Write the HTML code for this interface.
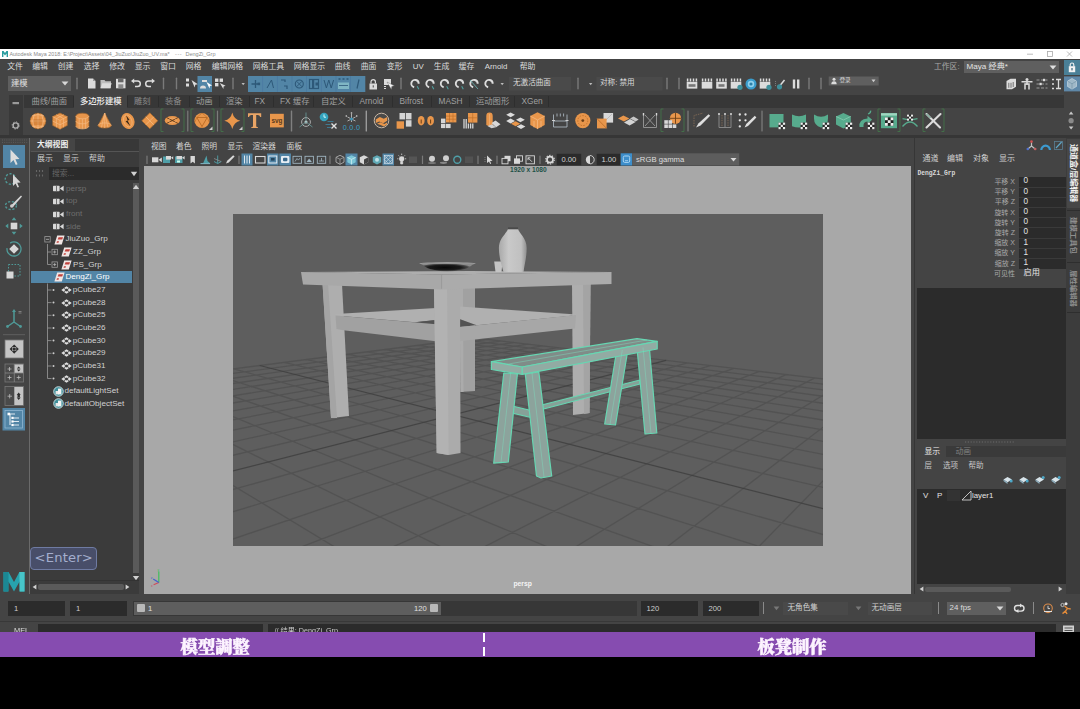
<!DOCTYPE html><html><head><meta charset="utf-8"><title>Maya</title><style>
html,body{margin:0;padding:0;background:#000;}
body{width:1080px;height:709px;position:relative;overflow:hidden;font-family:"Liberation Sans","Noto Sans CJK SC",sans-serif;}
#r div,#r span,#r svg{position:absolute;}
#r span{white-space:nowrap;line-height:1;}
#r{position:absolute;left:-4px;top:0;width:1088px;height:709px;filter:blur(0.5px);}
#q{position:absolute;left:4px;top:0;width:1080px;height:709px;}
</style></head><body><div id="r"><div style="left:0;top:59px;width:1088px;height:573.4px;background:#444"></div><div id="q"><div style="left:0px;top:49px;width:1080px;height:10px;background:#fff;"></div>
<span style="left:9.5px;top:51.8px;font-size:5.4px;color:#8a8a8a;">Autodesk Maya 2018: E:\Project\Assets\04_JiuZuo\JiuZuo_UV.ma*</span>
<span style="left:175px;top:51.8px;font-size:5.5px;color:#9a9a9a;letter-spacing:.6px;">---</span>
<span style="left:185.5px;top:51.8px;font-size:5.5px;color:#8a8a8a;">DengZi_Grp</span>
<svg style="left:1px;top:50px;width:8px;height:8px" viewBox="0 0 8 8"><path d="M1 7 V1 H2.6 L4 3 L5.4 1 H7 V7 H5.6 V3.6 L4 5.6 L2.4 3.6 V7Z" fill="#2a9d9f"/></svg>
<svg style="left:1020px;top:49px;width:60px;height:10px" viewBox="1020 49 60 10"><path d="M1027 54.2 h6" stroke="#aaa" stroke-width=".8"/><rect x="1047.5" y="51.5" width="5" height="5" fill="none" stroke="#aaa" stroke-width=".8"/><path d="M1067 51.5 l5 5 M1072 51.5 l-5 5" stroke="#aaa" stroke-width=".8"/></svg>
<div style="left:0px;top:59px;width:1080px;height:573px;background:#444444;"></div>
<span style="left:7.2px;top:63px;font-size:7.9px;color:#dcdcdc;">文件</span>
<span style="left:32.2px;top:63px;font-size:7.9px;color:#dcdcdc;">编辑</span>
<span style="left:57.7px;top:63px;font-size:7.9px;color:#dcdcdc;">创建</span>
<span style="left:83.7px;top:63px;font-size:7.9px;color:#dcdcdc;">选择</span>
<span style="left:109.2px;top:63px;font-size:7.9px;color:#dcdcdc;">修改</span>
<span style="left:134.7px;top:63px;font-size:7.9px;color:#dcdcdc;">显示</span>
<span style="left:160.2px;top:63px;font-size:7.9px;color:#dcdcdc;">窗口</span>
<span style="left:185.7px;top:63px;font-size:7.9px;color:#dcdcdc;">网格</span>
<span style="left:211.7px;top:63px;font-size:7.9px;color:#dcdcdc;">编辑网格</span>
<span style="left:252.7px;top:63px;font-size:7.9px;color:#dcdcdc;">网格工具</span>
<span style="left:293.7px;top:63px;font-size:7.9px;color:#dcdcdc;">网格显示</span>
<span style="left:334.7px;top:63px;font-size:7.9px;color:#dcdcdc;">曲线</span>
<span style="left:360.7px;top:63px;font-size:7.9px;color:#dcdcdc;">曲面</span>
<span style="left:386.7px;top:63px;font-size:7.9px;color:#dcdcdc;">变形</span>
<span style="left:412.7px;top:63px;font-size:7.9px;color:#dcdcdc;">UV</span>
<span style="left:433.7px;top:63px;font-size:7.9px;color:#dcdcdc;">生成</span>
<span style="left:458.7px;top:63px;font-size:7.9px;color:#dcdcdc;">缓存</span>
<span style="left:484.7px;top:63px;font-size:7.9px;color:#dcdcdc;">Arnold</span>
<span style="left:519.7px;top:63px;font-size:7.9px;color:#dcdcdc;">帮助</span>
<span style="left:934px;top:62.8px;font-size:7.8px;color:#a8a8a8;">工作区:</span>
<div style="left:963.5px;top:61px;width:95.5px;height:12px;background:#5f5f5f;"></div>
<span style="left:966.5px;top:62.8px;font-size:8.1px;color:#e4e4e4;">Maya 经典*</span>
<svg style="left:1049px;top:65px;width:8px;height:5px" viewBox="0 0 8 5"><path d="M.6 .6 H7.4 L4 4.6Z" fill="#e0e0e0"/></svg>
<div style="left:1064px;top:59.5px;width:16px;height:15.5px;background:#4a8097;"></div>
<svg style="left:1068px;top:62px;width:8px;height:11px" viewBox="0 0 8 11"><rect x=".8" y="4.2" width="6.4" height="6" fill="#f2f2f2"/><path d="M2.2 4.4 V2.8 a1.8 1.8 0 0 1 3.6 0 V4.4" fill="none" stroke="#f2f2f2" stroke-width="1.1"/><rect x="3.4" y="6" width="1.2" height="2.4" fill="#3a6a80"/></svg>
<div style="left:8px;top:76px;width:63px;height:14.5px;background:#5f5f5f;"></div>
<span style="left:11px;top:78.8px;font-size:8.3px;color:#e0e0e0;">建模</span>
<svg style="left:61px;top:81px;width:8px;height:5px" viewBox="0 0 8 5"><path d="M.6 .6 H7.4 L4 4.6Z" fill="#d8d8d8"/></svg>
<svg style="left:0;top:74px;width:1080px;height:20px" viewBox="0 74 1080 20"><rect x="76.3" y="77.5" width="1.4" height="12" rx=".7" fill="#7a7a7a"/><rect x="162.8" y="77.5" width="1.4" height="12" rx=".7" fill="#7a7a7a"/><rect x="175.8" y="77.5" width="1.4" height="12" rx=".7" fill="#7a7a7a"/><rect x="232.3" y="77.5" width="1.4" height="12" rx=".7" fill="#7a7a7a"/><rect x="400.3" y="77.5" width="1.4" height="12" rx=".7" fill="#7a7a7a"/><rect x="577.3" y="77.5" width="1.4" height="12" rx=".7" fill="#7a7a7a"/><rect x="666.3" y="77.5" width="1.4" height="12" rx=".7" fill="#7a7a7a"/><rect x="678.3" y="77.5" width="1.4" height="12" rx=".7" fill="#7a7a7a"/><rect x="808.3" y="77.5" width="1.4" height="12" rx=".7" fill="#7a7a7a"/><rect x="820.3" y="77.5" width="1.4" height="12" rx=".7" fill="#7a7a7a"/><path d="M88 78.5 h5 l2.5 2.5 v7.5 h-7.5z" fill="#dcdcdc"/><path d="M93 78.5 v2.5 h2.5" fill="#9a9a9a"/><path d="M100.5 80 h4 l1 1.2 h5.5 v7 h-10.5z" fill="#bdbdbd"/><path d="M100.5 88.2 l1.8-5 h9.4 l-1.8 5z" fill="#dcdcdc"/><rect x="116" y="78.8" width="9.5" height="9.5" fill="#dcdcdc"/><rect x="118" y="78.8" width="5.5" height="3.5" fill="#666"/><rect x="118.3" y="84.3" width="5" height="4" fill="#888"/><path d="M133.5 81 H137.5 a2.8 2.8 0 0 1 0 5.6 H135" fill="none" stroke="#dcdcdc" stroke-width="1.5"/><path d="M131 81 l3.2-2.4 v4.8z" fill="#dcdcdc"/><path d="M152.5 81 H148.5 a2.8 2.8 0 0 0 0 5.6 H151" fill="none" stroke="#dcdcdc" stroke-width="1.5"/><path d="M155 81 l-3.2-2.4 v4.8z" fill="#dcdcdc"/><rect x="186" y="78.5" width="3" height="3" fill="#dcdcdc"/><rect x="186" y="83.5" width="3" height="3" fill="#dcdcdc"/><path d="M191.5 80 l3.2 7.5 l.6-2.8 l2.6-.4z" fill="#dcdcdc"/><rect x="197.5" y="76" width="14.5" height="16" fill="#5285a6"/><path d="M200 88.5 a3 3 0 0 1 6 0z" fill="#dcdcdc"/><path d="M202 80 h5 v2 h-5z" fill="#dcdcdc"/><path d="M206.5 82 l3 6.5 l.4-2.6 l2.2-.4z" fill="#fff"/><rect x="215" y="78.5" width="3.4" height="3.4" fill="#dcdcdc"/><rect x="219.6" y="78.5" width="3.4" height="3.4" fill="#dcdcdc"/><rect x="215" y="83" width="3.4" height="3.4" fill="#dcdcdc"/><path d="M219.8 83 l3.6 6 l.2-2.6 l2-.6z" fill="#dcdcdc"/><path d="M241.5 83 h3.4 l-1.7 2.2z" fill="#bbb"/><rect x="248" y="76" width="117.3" height="16" fill="#5285a6"/><rect x="262.3" y="76" width=".8" height="16" fill="#4877a0" opacity=".8"/><rect x="276.9" y="76" width=".8" height="16" fill="#4877a0" opacity=".8"/><rect x="291.6" y="76" width=".8" height="16" fill="#4877a0" opacity=".8"/><rect x="306.2" y="76" width=".8" height="16" fill="#4877a0" opacity=".8"/><rect x="320.9" y="76" width=".8" height="16" fill="#4877a0" opacity=".8"/><rect x="335.6" y="76" width=".8" height="16" fill="#4877a0" opacity=".8"/><rect x="350.2" y="76" width=".8" height="16" fill="#4877a0" opacity=".8"/><path d="M251.5 84 h8 M255.5 80 v8" stroke="#2d5878" stroke-width="1.3"/><rect x="257.5" y="82.6" width="2.6" height="2.6" fill="#2d5878"/><path d="M267 88 l4.5-8 l2 8" fill="none" stroke="#2d5878" stroke-width="1"/><path d="M281 80 h4 v2 M284 86 h3 v3" fill="none" stroke="#2d5878" stroke-width="1.2"/><circle cx="299.3" cy="84" r="4" fill="none" stroke="#2d5878" stroke-width="1.1"/><path d="M296.5 81.2 l5.6 5.6 M302.1 81.2 l-5.6 5.6" stroke="#2d5878" stroke-width=".9"/><rect x="309.5" y="79.5" width="9" height="9" fill="none" stroke="#2d5878" stroke-width="1.2"/><rect x="312" y="80" width="2.2" height="8" fill="#2d5878"/><rect x="315.5" y="82.5" width="2.5" height="3" fill="#2d5878"/><path d="M324 80 l2.4 8 l2.4-8 l2.4 8 l2.4-8" fill="none" stroke="#2d5878" stroke-width="1"/><path d="M338.5 79 h2 M342.5 79 h2 M346.5 79 h2" stroke="#2d5878" stroke-width="1.6"/><rect x="338" y="82.5" width="11" height="6.5" fill="#7fb6c4"/><path d="M339 85.5 h9" stroke="#2d5878" stroke-width=".8"/><path d="M359 79.5 l-2 9" stroke="#2d5878" stroke-width="1.2"/><rect x="369.5" y="83.5" width="7.5" height="6" fill="#dcdcdc"/><path d="M371 83.6 v-1.8 a2.2 2.2 0 0 1 4.4 0 v1.8" fill="none" stroke="#dcdcdc" stroke-width="1.2"/><rect x="372.7" y="85.3" width="1.1" height="2.2" fill="#555"/><rect x="384" y="79" width="7" height="6" fill="#dcdcdc"/><path d="M387 82 l4.4 7.4 l.4-3 l2.6-.6z" fill="#f4f4f4" stroke="#555" stroke-width=".4"/><path d="M384 86.5 h2 M384 88.5 h2" stroke="#dcdcdc" stroke-width="1"/><circle cx="415" cy="83.6" r="3.7" fill="none" stroke="#dcdcdc" stroke-width="1.9" stroke-dasharray="16.2 7.05" transform="rotate(103 415 83.6)"/><path d="M417.2 86.2 l1.6 3" stroke="#4fa0a0" stroke-width="1.1"/><circle cx="430" cy="83.6" r="3.7" fill="none" stroke="#dcdcdc" stroke-width="1.9" stroke-dasharray="16.2 7.05" transform="rotate(103 430 83.6)"/><path d="M432.2 86.2 l1.6 3" stroke="#4fa0a0" stroke-width="1.1"/><circle cx="444.5" cy="83.6" r="3.7" fill="none" stroke="#dcdcdc" stroke-width="1.9" stroke-dasharray="16.2 7.05" transform="rotate(103 444.5 83.6)"/><path d="M446.7 86.2 l1.6 3" stroke="#4fa0a0" stroke-width="1.1"/><circle cx="459.5" cy="83.6" r="3.7" fill="none" stroke="#dcdcdc" stroke-width="1.9" stroke-dasharray="16.2 7.05" transform="rotate(103 459.5 83.6)"/><path d="M461.7 86.2 l1.6 3" stroke="#4fa0a0" stroke-width="1.1"/><circle cx="474" cy="83.6" r="3.7" fill="none" stroke="#dcdcdc" stroke-width="1.9" stroke-dasharray="16.2 7.05" transform="rotate(103 474 83.6)"/><path d="M470 80 l8 9" stroke="#6aa" stroke-width=".9"/><circle cx="489" cy="83.6" r="3.7" fill="none" stroke="#dcdcdc" stroke-width="1.9" stroke-dasharray="16.2 7.05" transform="rotate(103 489 83.6)"/><path d="M500.5 83 h3.4 l-1.7 2.2z" fill="#bbb"/><rect x="509" y="77" width="62" height="13.5" fill="#4a4a4a"/><path d="M589 83 h3.4 l-1.7 2.2z" fill="#bbb"/><rect x="596.5" y="77" width="66" height="13.5" fill="#4a4a4a"/><rect x="686.7" y="81.8" width="10.6" height="6.8" fill="#dcdcdc"/><path d="M687.6 78.6 v3 M690.5 78.6 v3 M693.5 78.6 v3 M696.4 78.6 v3" stroke="#dcdcdc" stroke-width="1.5"/><rect x="688.5" y="84.2" width="7" height="2.6" fill="#777"/><rect x="701.7" y="81.8" width="10.6" height="6.8" fill="#dcdcdc"/><path d="M702.6 78.6 v3 M705.5 78.6 v3 M708.5 78.6 v3 M711.4 78.6 v3" stroke="#dcdcdc" stroke-width="1.5"/><rect x="716.2" y="81.8" width="10.6" height="6.8" fill="#dcdcdc"/><path d="M717.1 78.6 v3 M720.0 78.6 v3 M723.0 78.6 v3 M725.9 78.6 v3" stroke="#dcdcdc" stroke-width="1.5"/><rect x="718.5" y="84.2" width="6" height="2.6" fill="#777"/><rect x="730.7" y="81.8" width="10.6" height="6.8" fill="#dcdcdc"/><path d="M731.6 78.6 v3 M734.5 78.6 v3 M737.5 78.6 v3 M740.4 78.6 v3" stroke="#dcdcdc" stroke-width="1.5"/><circle cx="740" cy="87.3" r="2.6" fill="#3f8f9a"/><circle cx="751" cy="84" r="5.5" fill="#3a9ccc"/><circle cx="751" cy="84" r="3.2" fill="#8fd0ec"/><circle cx="751" cy="84" r="1.6" fill="#2b7fa8"/><rect x="759.7" y="81.8" width="10.6" height="6.8" fill="#dcdcdc"/><path d="M760.6 78.6 v3 M763.5 78.6 v3 M766.5 78.6 v3 M769.4 78.6 v3" stroke="#dcdcdc" stroke-width="1.5"/><circle cx="769" cy="87.3" r="2.6" fill="#3f8f9a"/><path d="M778 88 l6.5-8" stroke="#dcdcdc" stroke-width="1.5"/><circle cx="779.5" cy="86.8" r="2.6" fill="#3f8f9a"/><path d="M775.5 81 v5" stroke="#888" stroke-width=".8" stroke-dasharray="1 1"/><rect x="792.8" y="79.5" width="2.4" height="9" fill="#dcdcdc"/><rect x="797" y="79.5" width="2.4" height="9" fill="#dcdcdc"/><rect x="828.7" y="76.5" width="50" height="9" fill="#5f5f5f"/><circle cx="834" cy="79.3" r="1.5" fill="#dcdcdc"/><path d="M831.3 84.3 a2.7 3 0 0 1 5.4 0z" fill="#dcdcdc"/><path d="M871.5 79.6 h4 l-2 2.6z" fill="#ccc"/><path d="M1006.5 81 l4-2.2 h5.5 v8 l-4 2.4 h-5.5z" fill="#dcdcdc"/><path d="M1008.8 82.8 v5 M1011 82.8 v5 M1013.2 82 v5" stroke="#555" stroke-width=".8"/><circle cx="1027" cy="79.4" r="1.5" fill="#dcdcdc"/><path d="M1021.5 81.8 h11 M1027 81 v4 M1025 89.5 v-5.5 h4 v5.5" stroke="#dcdcdc" stroke-width="1.5" fill="none"/><path d="M1036.5 80 h11 M1036.5 84 h11 M1036.5 88 h11" stroke="#9a9a9a" stroke-width="1" stroke-dasharray="3 1.5"/><rect x="1043" y="78.8" width="2.2" height="2.4" fill="#dcdcdc"/><rect x="1039.5" y="82.8" width="2.2" height="2.4" fill="#dcdcdc"/><path d="M1052 79.5 h2 M1052 84 h2 M1052 88.5 h2" stroke="#dcdcdc" stroke-width="1.6"/><path d="M1056 79.5 h5 M1058.5 79.5 v9 M1056 88.5 h5" stroke="#dcdcdc" stroke-width="1.3" fill="none"/><rect x="1064" y="76.4" width="16" height="15" fill="#5f88a8"/><path d="M1072 78.5 l4.5 2.6 v5.4 l-4.5 2.6 l-4.5-2.6 v-5.4z" fill="#9fb8c8" stroke="#d0dde6" stroke-width=".6"/><path d="M1072 83.8 v5 M1067.5 81.1 l4.5 2.7 l4.5-2.7" stroke="#6f8ea3" stroke-width=".6" fill="none"/></svg>
<span style="left:513px;top:79.4px;font-size:7.6px;color:#dadada;">无激活曲面</span>
<span style="left:600px;top:79.4px;font-size:7.6px;color:#dadada;">对称: 禁用</span>
<span style="left:839.5px;top:77.6px;font-size:5.6px;color:#dadada;">登录</span>
<div style="left:23.5px;top:95.4px;width:1040px;height:12.3px;background:#373737;"></div>
<div style="left:9px;top:95px;width:13.5px;height:40px;background:#393939;"></div>
<div style="left:74px;top:95px;width:52.5px;height:13px;background:#444;"></div>
<span style="left:31.5px;top:97.3px;font-size:8.3px;color:#a0a0a0;">曲线/曲面</span>
<span style="left:80px;top:97.3px;font-size:8.3px;color:#f0f0f0;font-weight:500;">多边形建模</span>
<span style="left:134px;top:97.3px;font-size:8.3px;color:#8a8a8a;">雕刻</span>
<span style="left:165px;top:97.3px;font-size:8.3px;color:#8a8a8a;">装备</span>
<span style="left:196px;top:97.3px;font-size:8.3px;color:#a0a0a0;">动画</span>
<span style="left:226px;top:97.3px;font-size:8.3px;color:#a0a0a0;">渲染</span>
<span style="left:254.5px;top:97.3px;font-size:8.3px;color:#a0a0a0;">FX</span>
<span style="left:280px;top:97.3px;font-size:8.3px;color:#a0a0a0;">FX 缓存</span>
<span style="left:321px;top:97.3px;font-size:8.3px;color:#a0a0a0;">自定义</span>
<span style="left:359.5px;top:97.3px;font-size:8.3px;color:#a0a0a0;">Arnold</span>
<span style="left:399.5px;top:97.3px;font-size:8.3px;color:#a0a0a0;">Bifrost</span>
<span style="left:438.5px;top:97.3px;font-size:8.3px;color:#a0a0a0;">MASH</span>
<span style="left:476px;top:97.3px;font-size:8.3px;color:#a0a0a0;">运动图形</span>
<span style="left:521.5px;top:97.3px;font-size:8.3px;color:#a0a0a0;">XGen</span>
<div style="left:73px;top:96px;width:1px;height:11px;background:#2e2e2e;"></div>
<div style="left:127px;top:96px;width:1px;height:11px;background:#2e2e2e;"></div>
<div style="left:158px;top:96px;width:1px;height:11px;background:#2e2e2e;"></div>
<div style="left:189px;top:96px;width:1px;height:11px;background:#2e2e2e;"></div>
<div style="left:219px;top:96px;width:1px;height:11px;background:#2e2e2e;"></div>
<div style="left:249px;top:96px;width:1px;height:11px;background:#2e2e2e;"></div>
<div style="left:273px;top:96px;width:1px;height:11px;background:#2e2e2e;"></div>
<div style="left:313px;top:96px;width:1px;height:11px;background:#2e2e2e;"></div>
<div style="left:352px;top:96px;width:1px;height:11px;background:#2e2e2e;"></div>
<div style="left:392px;top:96px;width:1px;height:11px;background:#2e2e2e;"></div>
<div style="left:431px;top:96px;width:1px;height:11px;background:#2e2e2e;"></div>
<div style="left:469px;top:96px;width:1px;height:11px;background:#2e2e2e;"></div>
<div style="left:514px;top:96px;width:1px;height:11px;background:#2e2e2e;"></div>
<div style="left:548px;top:96px;width:1px;height:11px;background:#2e2e2e;"></div>
<svg style="left:9px;top:95px;width:14px;height:40px" viewBox="9 95 14 40"><rect x="12.5" y="102" width="6.5" height="2.2" fill="#9a9a9a"/><circle cx="15.7" cy="125.5" r="2.6" fill="none" stroke="#b0b0b0" stroke-width="1.4"/><circle cx="15.7" cy="125.5" r="3.6" fill="none" stroke="#b0b0b0" stroke-width="1" stroke-dasharray="1.2 1.6"/></svg>
<svg style="left:0;top:107px;width:1080px;height:29px" viewBox="0 107 1080 29"><circle cx="38" cy="121" r="7.8" fill="#e8964b" stroke="#a8682c" stroke-width=".7"/><path d="M30.3 121 h15.4 M38 113 v16 M32 116 q6 -3 12 0 M32 126 q6 3 12 0 M34.3 114 q-3 7 0 14 M41.7 114 q3 7 0 14" stroke="#f4b981" stroke-width=".8" fill="none"/><rect x="33.5" y="119" width="9" height="6" fill="#b96a24" opacity=".35"/><path d="M60 113 l7.3 3.6 v8.8 l-7.3 3.8 l-7.3-3.8 v-8.8z" fill="#e8964b" stroke="#a8682c" stroke-width=".7"/><path d="M52.7 116.6 l7.3 3.8 l7.3-3.8 M60 120.4 v8.8 M56.3 114.8 l7.3 3.8 v8.7 M63.7 114.8 l-7.3 3.8 v8.7 M52.7 121 l7.3 3.8 l7.3-3.8" stroke="#f4b981" stroke-width=".7" fill="none"/><path d="M75.9 116 a6.5 2.8 0 0 1 13 0 v10 a6.5 2.8 0 0 1 -13 0z" fill="#e8964b" stroke="#a8682c" stroke-width=".7"/><path d="M75.9 116 a6.5 2.8 0 0 0 13 0 M75.9 121 a6.5 2.8 0 0 0 13 0 M75.9 126 a6.5 2.8 0 0 0 13 0 M79.2 118.4 v10 M85.6 118.4 v10 M82.4 118.8 v10" stroke="#f4b981" stroke-width=".7" fill="none"/><path d="M104.7 113 l6.6 12.5 a6.6 2.6 0 0 1 -13.2 0z" fill="#e8964b" stroke="#a8682c" stroke-width=".7"/><path d="M104.7 113 v15 M98.1 125.5 a6.6 2.6 0 0 1 13.2 0 M104.7 113 l-3.3 14.6 M104.7 113 l3.3 14.6" stroke="#f4b981" stroke-width=".7" fill="none"/><ellipse cx="127.8" cy="121" rx="6.6" ry="8.2" fill="#e8964b" transform="rotate(-20 127.8 121)"/><path d="M126 115 l3.6 5 l-2 .6 l3 6 l-5-5.4 l2-.6z" fill="#3d2a18"/><ellipse cx="127.8" cy="121" rx="4" ry="6.2" fill="none" stroke="#f4b981" stroke-width=".6" transform="rotate(-20 127.8 121)"/><path d="M149.8 112.8 l8 8 l-8 8 l-8-8z" fill="#e8964b" stroke="#a8682c" stroke-width=".7"/><path d="M145.8 116.8 l8 8 M153.8 116.8 l-8 8" stroke="#f4b981" stroke-width=".8"/><path d="M163.5 109 h-2.5 v22.5 h2.5 M181.5 109 h2.5 v22.5 h-2.5" stroke="#42784a" stroke-width=".8" fill="none"/><ellipse cx="172.3" cy="120.5" rx="7.6" ry="4.6" fill="#e8964b"/><path d="M166.5 117.5 l11.6 6 M178.1 117.5 l-11.6 6" stroke="#5a3a1c" stroke-width=".9"/><ellipse cx="172.3" cy="120.5" rx="4" ry="2.3" fill="none" stroke="#f4b981" stroke-width=".5"/><rect x="187.20000000000002" y="110.5" width="1.2" height="21" rx=".6" fill="#7c7c7c"/><path d="M193.5 109 h-2.5 v22.5 h2.5 M211.5 109 h2.5 v22.5 h-2.5" stroke="#42784a" stroke-width=".8" fill="none"/><circle cx="202" cy="120.5" r="7.6" fill="#e8964b"/><path d="M196.8 117.5 h10.4 l-5.2 9z" fill="none" stroke="#b96a24" stroke-width=".9"/><path d="M202 113 l-5.2 4.5 M202 113 l5.2 4.5 M196.8 117.5 l-2.2 5 M207.2 117.5 l2.2 5 M202 126.5 v1.6" stroke="#b96a24" stroke-width=".6"/><path d="M212.5 126.5 v3.5 h-3.5z" fill="#cfcfcf"/><rect x="216.9" y="110.5" width="1.2" height="21" rx=".6" fill="#7c7c7c"/><path d="M223.5 109 h-2.5 v22.5 h2.5 M241.5 109 h2.5 v22.5 h-2.5" stroke="#42784a" stroke-width=".8" fill="none"/><path d="M232.3 112.5 q1.6 6.8 8 8.3 q-6.4 1.5 -8 8.3 q-1.6-6.8 -8-8.3 q6.4-1.5 8-8.3z" fill="#e8964b"/><path d="M242.5 126.5 v3.5 h-3.5z" fill="#cfcfcf"/><path d="M248 113.3 h13.2 v3.6 h-1 q-.4-2 -2.4-2 h-1.6 v11 q0 1.2 1.8 1.3 v.9 h-6.8 v-.9 q1.8-.1 1.8-1.3 v-11 h-1.6 q-2 0 -2.4 2 h-1z" fill="#e9a566"/><rect x="270" y="113.8" width="13.8" height="13.6" fill="#e8964b"/><text x="276.9" y="123" font-size="6.4" font-weight="700" fill="#5a3a1c" text-anchor="middle" font-family="Liberation Sans,sans-serif">svg</text><rect x="290.8" y="110.5" width="1.4" height="21" rx=".6" fill="#808080"/><circle cx="306" cy="122" r="4.4" fill="none" stroke="#b8b8b8" stroke-width=".9"/><circle cx="306" cy="122" r="1.5" fill="#e4e4e4"/><path d="M306 122 V112.5 M306 122 L299.5 127 M306 122 L312.5 127" stroke="#6a9c9c" stroke-width=".8"/><circle cx="324" cy="117" r="4.3" fill="#35a3bd"/><path d="M324 114.4 v2.8 h2" stroke="#dff" stroke-width=".9" fill="none"/><path d="M327.5 121.5 h6 M325.5 124.5 h5 M327 127.5 h4" stroke="#3f7f98" stroke-width=".9"/><path d="M331.5 123.5 l5 5 M336.5 123.5 l-5 5" stroke="#e2e2e2" stroke-width="1.4"/><path d="M351.5 114 v8 M347.5 117 l8 4 M355.5 117 l-8 4" stroke="#c8c8c8" stroke-width=".8"/><circle cx="351.5" cy="119" r="1.6" fill="#3f8fb0"/><circle cx="346.3" cy="116" r=".8" fill="#ddd"/><circle cx="356.7" cy="116" r=".8" fill="#ddd"/><circle cx="351.5" cy="113" r=".8" fill="#ddd"/><text x="351.5" y="129.5" font-size="7.2" fill="#3b9fc4" text-anchor="middle" font-family="Liberation Sans,sans-serif" letter-spacing=".3">0.0.0</text><rect x="365.6" y="110.5" width="1.4" height="21" rx=".6" fill="#9a9a9a"/><circle cx="381.5" cy="120.5" r="7.3" fill="#4a4a4a" stroke="#c9b7a5" stroke-width="1"/><path d="M375.8 119.5 l4-2.6 l4 1.8 l3.4-1.6 v3.6 l-4 2.6 l-4-1.8 l-3.4 1.6z" fill="#e8964b"/><path d="M377 123.8 l3.4-1.6 l4 1.8 l2.6-1.4 v1.8 l-3 2 l-4-1.6z" fill="#e8964b"/><rect x="399.5" y="113" width="5.6" height="6.4" fill="#d4d4d4"/><rect x="405.9" y="113" width="5.6" height="6.4" fill="#d4d4d4"/><rect x="405.9" y="120.2" width="5.6" height="6.4" fill="#d4d4d4"/><rect x="396.6" y="121.3" width="7.4" height="7.4" fill="#e8964b"/><ellipse cx="421.2" cy="120.7" rx="3.4" ry="4.8" fill="#e8964b"/><ellipse cx="430.6" cy="120.7" rx="3.4" ry="4.8" fill="#e8964b"/><path d="M421.2 119.5 v4 M430.6 119.5 v4" stroke="#6b3f17" stroke-width="1"/><rect x="446" y="113" width="10.4" height="9.4" fill="#e8964b"/><path d="M449.5 113 v9.4 M453 113 v9.4 M446 116.1 h10.4 M446 119.2 h10.4" stroke="#b96a24" stroke-width=".6"/><rect x="441" y="118.6" width="4.4" height="4.6" fill="#d6d6d6"/><rect x="441" y="123.9" width="4.4" height="4.2" fill="#d6d6d6"/><rect x="446" y="123.9" width="4.6" height="4.2" fill="#d6d6d6"/><rect x="468" y="113" width="9.4" height="9.6" fill="#e8964b"/><path d="M472.7 113 v9.6 M468 117.8 h9.4" stroke="#b96a24" stroke-width=".6"/><path d="M464 119 v9.4 M466.2 119 v9.4 M468.4 123.4 v5 M470.6 123.4 v5 M472.8 123.4 v5" stroke="#d6d6d6" stroke-width="1.3"/><path d="M486.3 116 a3.2 3.4 0 0 1 6.4 0 v9 l-3.2 1.6 l-3.2-1.6z" fill="#e8964b"/><path d="M489.5 114 v11" stroke="#f4b981" stroke-width=".6"/><path d="M491.5 123 l4-2.4 l5 3.6 l-4.4 3z" fill="#d8d8d8"/><path d="M487.5 126 l4 2.2 l4.6-1 l-4-3z" fill="#d0d0d0"/><path d="M510.6 112.4 l4.4 2.4 l-4.4 2.4 l-4.4-2.4z" fill="#dcdcdc"/><path d="M510.6 118.6 l4.4 2.4 l-4.4 2.4 l-4.4-2.4z" fill="#dcdcdc"/><path d="M520.4 117.4 l4.4 2.4 l-4.4 2.4 l-4.4-2.4z" fill="#dcdcdc"/><path d="M521 124.2 l4.4 2.4 l-4.4 2.4 l-4.4-2.4z" fill="#dcdcdc"/><path d="M515.6 121.2 l4.6 2.5 l-4.6 2.5 l-4.6-2.5z" fill="#e8964b"/><path d="M537.5 112.3 l7.2 3.8 v9 l-7.2 4 l-7.2-4 v-9z" fill="#e8964b"/><path d="M530.3 116.1 l7.2 3.8 l7.2-3.8 M537.5 119.9 v9.2 M534 121 v6.4 M541 121 v6.4" stroke="#f4b981" stroke-width=".8" fill="none"/><path d="M553.5 114.5 v12.5 h13.5 v-12.5 M553.5 121 h13.5 M557 113.5 v3 M560.3 113.5 v3 M563.6 113.5 v3" stroke="#a9b4bd" stroke-width=".9" fill="none"/><path d="M552 120.5 l3 0 M565.5 120.5 h3" stroke="#d0d0d0" stroke-width="1.2"/><circle cx="582.8" cy="120.6" r="7.6" fill="#e8964b"/><circle cx="582.8" cy="120.6" r="5" fill="none" stroke="#b96a24" stroke-width=".8" stroke-dasharray="1.6 1.2"/><circle cx="582.8" cy="120.6" r="1.4" fill="#6b3f17"/><rect x="603.5" y="113" width="9.6" height="9.6" fill="#d8d8d8"/><path d="M605 121 l7-7" stroke="#aaa" stroke-width=".6"/><rect x="597" y="118.6" width="9.6" height="9.8" fill="#e8964b"/><path d="M597 118.6 l9.6 9.8" stroke="#b96a24" stroke-width=".8"/><path d="M623.4 115.4 l6 3.2 l-5.4 3 l-6-3.2z" fill="#e8964b"/><path d="M624 122.4 l6-3.4 l5.6 3 l-6 3.6z" fill="#d4d4d4"/><path d="M630 118.6 l3.6-2 l5 2.8 l-3 2z" fill="#c6c6c6"/><path d="M643.5 114 v13.5 M656.5 114 v13.5 M643.5 127.5 h13 M645 115 l10 11 M655 115 l-10 11" stroke="#9a9a9a" stroke-width=".9" fill="none"/><path d="M643.5 113 v2.4 M656.5 113 v2.4" stroke="#d8d8d8" stroke-width="1.4"/><path d="M663.5 109 h-2.5 v22.5 h2.5 M681.5 109 h2.5 v22.5 h-2.5" stroke="#42784a" stroke-width=".8" fill="none"/><circle cx="675.5" cy="118.3" r="5.6" fill="#e8964b"/><path d="M675.5 112.7 v11.2 M669.9 118.3 h11.2" stroke="#6b3f17" stroke-width=".9"/><rect x="664.3" y="120.2" width="3.6" height="3.6" fill="#d8d8d8"/><rect x="668.5" y="120.2" width="3.6" height="3.6" fill="#d8d8d8"/><rect x="664.3" y="124.4" width="3.6" height="3.6" fill="#d8d8d8"/><rect x="668.5" y="124.4" width="3.6" height="3.6" fill="#d8d8d8"/><rect x="672.7" y="124.4" width="3.6" height="3.6" fill="#d8d8d8"/><rect x="687.35" y="110.5" width="1.3" height="21" rx=".6" fill="#7a7a7a"/><path d="M694 126.5 v-11 l9-2.4" stroke="#8a6e58" stroke-width=".8" fill="none" stroke-dasharray="1.5 1"/><path d="M696 127.6 l2.6-4.4 l10-9 l1.6 1.6 l-9.6 9.6z" fill="#dedede"/><path d="M719 113.5 v14 M725 113.5 v14 M731 113.5 v14 M719 127.5 h12" stroke="#8f8f8f" stroke-width=".9" fill="none"/><path d="M722 115 v11 M728 115 v11" stroke="#8a6e58" stroke-width=".8" stroke-dasharray="1.4 1"/><path d="M719 113 v2 M725 113 v2 M731 113 v2" stroke="#ddd" stroke-width="1.4"/><circle cx="739.8" cy="114.5" r="1.15" fill="#e6e6e6"/><circle cx="745.5" cy="114.5" r="1.15" fill="#e6e6e6"/><circle cx="739.8" cy="120.3" r="1.15" fill="#e6e6e6"/><circle cx="745.5" cy="120.3" r="1.15" fill="#e6e6e6"/><circle cx="739.8" cy="126.4" r="1.15" fill="#e6e6e6"/><path d="M744.6 127.6 l1.6-3.6 l8.6-8.2 l1.6 1.6 l-8.4 8.6z" fill="#dedede"/><rect x="761.35" y="110.5" width="1.3" height="21" rx=".6" fill="#7a7a7a"/><rect x="769.5" y="114" width="14" height="13.4" fill="#57ab8d"/><rect x="778.5" y="122.6" width="6.6" height="6.6" fill="#2a2a2a"/><rect x="778.5" y="122.6" width="2.2" height="2.2" fill="#eee"/><rect x="782.9" y="122.6" width="2.2" height="2.2" fill="#eee"/><rect x="780.7" y="124.8" width="2.2" height="2.2" fill="#eee"/><rect x="778.5" y="127.0" width="2.2" height="2.2" fill="#eee"/><rect x="782.9" y="127.0" width="2.2" height="2.2" fill="#eee"/><path d="M792 114.6 q7 3.4 14 0 v11.6 q-7 2.6 -14 0z" fill="#57ab8d"/><rect x="800.6" y="122.6" width="6.6" height="6.6" fill="#2a2a2a"/><rect x="800.6" y="122.6" width="2.2" height="2.2" fill="#eee"/><rect x="805.0" y="122.6" width="2.2" height="2.2" fill="#eee"/><rect x="802.8000000000001" y="124.8" width="2.2" height="2.2" fill="#eee"/><rect x="800.6" y="127.0" width="2.2" height="2.2" fill="#eee"/><rect x="805.0" y="127.0" width="2.2" height="2.2" fill="#eee"/><path d="M814 114.4 q7 4.6 14 0 v4 q0 7 -7 9 q-7-2 -7-9z" fill="#57ab8d"/><rect x="822.6" y="122.6" width="6.6" height="6.6" fill="#2a2a2a"/><rect x="822.6" y="122.6" width="2.2" height="2.2" fill="#eee"/><rect x="827.0" y="122.6" width="2.2" height="2.2" fill="#eee"/><rect x="824.8000000000001" y="124.8" width="2.2" height="2.2" fill="#eee"/><rect x="822.6" y="127.0" width="2.2" height="2.2" fill="#eee"/><rect x="827.0" y="127.0" width="2.2" height="2.2" fill="#eee"/><path d="M843.4 113 l7.4 3.4 v8.2 l-7.4 3.8 l-7.4-3.8 v-8.2z" fill="#57ab8d"/><path d="M836 116.4 l7.4 3.6 l7.4-3.6" stroke="#8fd0b6" stroke-width=".7" fill="none"/><rect x="845.6" y="122.6" width="6.6" height="6.6" fill="#2a2a2a"/><rect x="845.6" y="122.6" width="2.2" height="2.2" fill="#eee"/><rect x="850.0" y="122.6" width="2.2" height="2.2" fill="#eee"/><rect x="847.8000000000001" y="124.8" width="2.2" height="2.2" fill="#eee"/><rect x="845.6" y="127.0" width="2.2" height="2.2" fill="#eee"/><rect x="850.0" y="127.0" width="2.2" height="2.2" fill="#eee"/><path d="M859.5 127 q-1-8 8-8.6 v-2.6 l4.6 4 l-4.6 4 v-2.4 q-4.6.4 -4 5.6z" fill="#57ab8d"/><path d="M868 114 q3-1 2.6-3.4" stroke="#57ab8d" stroke-width="1.3" fill="none"/><rect x="867.8" y="122.6" width="6.6" height="6.6" fill="#2a2a2a"/><rect x="867.8" y="122.6" width="2.2" height="2.2" fill="#eee"/><rect x="872.1999999999999" y="122.6" width="2.2" height="2.2" fill="#eee"/><rect x="870.0" y="124.8" width="2.2" height="2.2" fill="#eee"/><rect x="867.8" y="127.0" width="2.2" height="2.2" fill="#eee"/><rect x="872.1999999999999" y="127.0" width="2.2" height="2.2" fill="#eee"/><path d="M880.5 109 h-2.5 v22.5 h2.5 M897.5 109 h2.5 v22.5 h-2.5" stroke="#42784a" stroke-width=".8" fill="none"/><rect x="881" y="113.2" width="16" height="15" fill="#57ab8d"/><rect x="881" y="113.2" width="16" height="2.4" fill="#9fd6c0"/><rect x="885" y="117.4" width="8.4" height="8.4" fill="#1e1e1e"/><rect x="885" y="117.4" width="2.8" height="2.8" fill="#eee"/><rect x="890.6" y="117.4" width="2.8" height="2.8" fill="#eee"/><rect x="887.8" y="120.2" width="2.8" height="2.8" fill="#eee"/><rect x="885" y="123" width="2.8" height="2.8" fill="#eee"/><rect x="890.6" y="123" width="2.8" height="2.8" fill="#eee"/><path d="M902.5 118.6 q7.5 2 15 0 M902.5 126.5 q7.5-9 15 0" stroke="#57ab8d" stroke-width="1.3" fill="none"/><rect x="907" y="114.6" width="6" height="6" fill="#2a2a2a"/><rect x="907" y="114.6" width="2" height="2" fill="#eee"/><rect x="911" y="114.6" width="2" height="2" fill="#eee"/><rect x="909" y="116.6" width="2" height="2" fill="#eee"/><rect x="907" y="118.6" width="2" height="2" fill="#eee"/><rect x="911" y="118.6" width="2" height="2" fill="#eee"/><path d="M925.5 109 h-2.5 v22.5 h2.5 M941.5 109 h2.5 v22.5 h-2.5" stroke="#42784a" stroke-width=".8" fill="none"/><path d="M926.5 114 l13.5 13.5 M940.5 114 l-14 13.5" stroke="#dcdcdc" stroke-width="2.1" stroke-linecap="round"/><path d="M926.5 114 l4 4" stroke="#3d8a70" stroke-width="1" /><path d="M1068.8 114.6 h4.6 l-2.3-3z M1068.8 126.6 h4.6 l-2.3 3z" fill="#c8c8c8"/><circle cx="1071.1" cy="120.7" r="2.6" fill="#8a8a8a"/></svg>
<div style="left:0px;top:135.2px;width:1080px;height:3px;background:#363636;"></div>
<div style="left:29.3px;top:138px;width:1px;height:457px;background:#6a6a6a;"></div>
<div style="left:3px;top:145px;width:22px;height:23px;background:#5285a6;"></div>
<svg style="left:0;top:138px;width:29px;height:460px" viewBox="0 138 29 460"><path d="M10.5 149.5 L10.5 163 L13.5 160 L15.8 165 L17.6 164.2 L15.4 159.3 L19.5 159 Z" fill="#ddd"/><circle cx="10.5" cy="179" r="5.2" fill="none" stroke="#4f9a98" stroke-width="1.4" stroke-dasharray="2.2 1.6"/><path d="M13 174.5 L13 186 L15.6 183.4 L17.5 187.6 L19 186.9 L17.2 182.8 L20.6 182.5 Z" fill="#d6d6d6"/><ellipse cx="11" cy="205.5" rx="5.5" ry="4" fill="none" stroke="#4f9a98" stroke-width="1.3" stroke-dasharray="2.2 1.6"/><path d="M11.5 205 L21 195.5 L22 196.6 L13.3 206.5 Z" fill="#d8d8d8"/><circle cx="11.8" cy="206" r="1.8" fill="#ccc"/><rect x="10.7" y="222.7" width="6.6" height="6.6" fill="#d6d6d6"/><path d="M14 217.3 l2.4 3 h-4.8z M14 234.7 l2.4-3 h-4.8z M5.3 226 l3-2.4 v4.8z M22.7 226 l-3-2.4 v4.8z" fill="#4f9a98"/><circle cx="14" cy="249" r="7" fill="none" stroke="#4f9a98" stroke-width="1.3" stroke-dasharray="30 6" transform="rotate(-60 14 249)"/><rect x="10.6" y="245.6" width="6.8" height="6.8" fill="#d8d8d8" transform="rotate(45 14 249)"/><rect x="8.5" y="264.5" width="11.5" height="11.5" fill="none" stroke="#4f9a98" stroke-width="1" stroke-dasharray="1.6 1.4"/><rect x="6.5" y="271.5" width="7" height="7" fill="#d8d8d8"/><path d="M14 322 V311 M14 322 L7.5 326.5 M14 322 L20.5 326.5" stroke="#4f9a98" stroke-width="1.5" fill="none"/><path d="M14 309 l2 3 h-4z" fill="#4f9a98"/><circle cx="7.5" cy="326.5" r="1.4" fill="#4f9a98"/><circle cx="20.5" cy="326.5" r="1.4" fill="#4f9a98"/><path d="M18.5 311.5 h3 M18.5 313 h3" stroke="#999" stroke-width=".7"/><rect x="3" y="334" width="22" height="1.2" fill="#5a5a5a"/><rect x="5" y="340" width="18.5" height="18" fill="#c4c4c4" stroke="#777" stroke-width=".8"/><path d="M14.2 344.5 l2.6 2.6 h-5.2z M14.2 353.7 l2.6-2.6 h-5.2z M9.6 349.1 l2.6-2.6 v5.2z M18.8 349.1 l-2.6-2.6 v5.2z" fill="#2e2e2e"/><rect x="12.7" y="347.6" width="3" height="3" fill="#2e2e2e"/><rect x="5" y="364" width="18.5" height="18" fill="#4a4a4a" stroke="#777" stroke-width=".8"/><rect x="14.3" y="364.4" width="8.8" height="8.6" fill="#c4c4c4"/><path d="M14.3 364 V382 M5 373 H23.5" stroke="#888" stroke-width=".8"/><path d="M18.7 366.5 l1.8 2 h-3.6z M18.7 371.5 l1.8-2 h-3.6z" fill="#2e2e2e"/><path d="M9.5 367 v4 M7.5 369 h4 M9.5 375.5 v4 M7.5 377.5 h4 M18.7 375.5 v4 M16.7 377.5 h4" stroke="#bbb" stroke-width=".8"/><rect x="5" y="386.5" width="18.5" height="19" fill="#4a4a4a" stroke="#777" stroke-width=".8"/><rect x="14.3" y="387" width="8.8" height="18" fill="#c4c4c4"/><path d="M18.7 392.5 l2 2.4 h-4z M18.7 400 l2-2.4 h-4z" fill="#2e2e2e"/><rect x="17.5" y="395" width="2.4" height="2.4" fill="#2e2e2e"/><path d="M7.5 396.2 h4.5 M9.7 394 v4.4" stroke="#bbb" stroke-width=".8"/><rect x="2.5" y="408" width="22.5" height="22.5" fill="#5285a6"/><rect x="5" y="410.5" width="17.5" height="17.5" fill="none" stroke="#8fb6d2" stroke-width=".8"/><path d="M8 414 h7 M12 418 h7 M12 421.5 h7 M12 425 h7 M10 414 V425" stroke="#dfe9f0" stroke-width="1.1"/><rect x="7.5" y="412.7" width="2.6" height="2.6" fill="#fff"/><rect x="11.4" y="416.8" width="2.2" height="2.2" fill="#fff"/><rect x="11.4" y="420.4" width="2.2" height="2.2" fill="#fff"/><rect x="11.4" y="423.9" width="2.2" height="2.2" fill="#fff"/><path d="M3.5 591.5 V572 L8.6 572 L14 582 L19.4 572 L24.5 572 V591.5 H19.6 V581.5 L14 591.5 L8.4 581.5 V591.5 Z" fill="#27a3ae"/><path d="M3.5 591.5 V572 L8.6 572 L8.4 591.5 Z" fill="#1b8894"/><path d="M24.5 591.5 V572 L19.4 572 L19.6 591.5 Z" fill="#47c4c8"/></svg>
<svg style="left:2px;top:139px;width:26px;height:5px" viewBox="0 0 26 5"><path d="M0 1 h26 M0 3.4 h26" stroke="#5c5c5c" stroke-width="1" stroke-dasharray="1 1.2"/></svg>
<div style="left:30px;top:150px;width:109px;height:444px;background:#3b3b3b;"></div>
<div style="left:30px;top:138.5px;width:44.5px;height:13px;background:#454545;"></div>
<div style="left:74.5px;top:139px;width:64.5px;height:12px;background:#383838;"></div>
<span style="left:37px;top:140.6px;font-size:7.8px;color:#f0f0f0;font-weight:700;">大纲视图</span>
<div style="left:31px;top:151px;width:108px;height:1px;background:#555;"></div>
<span style="left:37px;top:154.8px;font-size:7.9px;color:#ccc;">展示</span>
<span style="left:63px;top:154.8px;font-size:7.9px;color:#ccc;">显示</span>
<span style="left:89px;top:154.8px;font-size:7.9px;color:#ccc;">帮助</span>
<div style="left:49px;top:167px;width:90px;height:13px;background:#2b2b2b;"></div>
<span style="left:52px;top:170px;font-size:7.8px;color:#666;">搜索...</span>
<svg style="left:130px;top:171px;width:8px;height:6px" viewBox="0 0 8 6"><path d="M0.8 0.8 H7.2 L4 5.2Z" fill="#d0d0d0"/></svg>
<svg style="left:35px;top:168px;width:10px;height:12px" viewBox="0 0 10 12"><path d="M1.5 2v2 M4.5 2v2 M7.5 2v2 M1.5 6.5v2 M4.5 6.5v2 M7.5 6.5v2" stroke="#666" stroke-width="1.1"/></svg>
<div style="left:132.5px;top:183px;width:6.5px;height:390px;background:#5a5a5a;"></div>
<svg style="left:132px;top:184px;width:8px;height:6px" viewBox="0 0 8 6"><path d="M0.8 5 H7.2 L4 .8Z" fill="#d0d0d0"/></svg>
<svg style="left:132px;top:575px;width:8px;height:6px" viewBox="0 0 8 6"><path d="M0.8 1 H7.2 L4 5.2Z" fill="#d0d0d0"/></svg>
<div style="left:31px;top:271px;width:100.5px;height:12.4px;background:#5285a6;"></div>
<svg style="left:53px;top:185.4px;width:11px;height:7px" viewBox="0 0 11 7"><rect x="0" y="0.8" width="6.6" height="5.4" rx=".6" fill="#d8d8d8"/><path d="M6.8 3.5 L10.6 0.8 V6.2Z" fill="#d8d8d8"/><rect x="3.2" y=".8" width=".8" height="5.4" fill="#555"/></svg>
<span style="left:66px;top:184.8px;font-size:8.1px;color:#6e6e6e;">persp</span>
<svg style="left:53px;top:198.1px;width:11px;height:7px" viewBox="0 0 11 7"><rect x="0" y="0.8" width="6.6" height="5.4" rx=".6" fill="#d8d8d8"/><path d="M6.8 3.5 L10.6 0.8 V6.2Z" fill="#d8d8d8"/><rect x="3.2" y=".8" width=".8" height="5.4" fill="#555"/></svg>
<span style="left:66px;top:197.4px;font-size:8.1px;color:#6e6e6e;">top</span>
<svg style="left:53px;top:210.7px;width:11px;height:7px" viewBox="0 0 11 7"><rect x="0" y="0.8" width="6.6" height="5.4" rx=".6" fill="#d8d8d8"/><path d="M6.8 3.5 L10.6 0.8 V6.2Z" fill="#d8d8d8"/><rect x="3.2" y=".8" width=".8" height="5.4" fill="#555"/></svg>
<span style="left:66px;top:210.1px;font-size:8.1px;color:#6e6e6e;">front</span>
<svg style="left:53px;top:223.4px;width:11px;height:7px" viewBox="0 0 11 7"><rect x="0" y="0.8" width="6.6" height="5.4" rx=".6" fill="#d8d8d8"/><path d="M6.8 3.5 L10.6 0.8 V6.2Z" fill="#d8d8d8"/><rect x="3.2" y=".8" width=".8" height="5.4" fill="#555"/></svg>
<span style="left:66px;top:222.8px;font-size:8.1px;color:#6e6e6e;">side</span>
<svg style="left:53.5px;top:234.5px;width:11px;height:10px" viewBox="0 0 11 10"><path d="M3.2 0.6 H10.6 L7.8 9.4 H0.4 Z" fill="#f0e6e4"/><path d="M4.5 2.2 H9 L8.2 4.6 H3.7Z" fill="#c0403a"/><path d="M3 6.2 H5 L4.5 7.8 H2.5Z" fill="#c0403a"/></svg>
<span style="left:65.5px;top:235.4px;font-size:8.1px;color:#d2d2d2;">JiuZuo_Grp</span>
<svg style="left:61px;top:247.2px;width:11px;height:10px" viewBox="0 0 11 10"><path d="M3.2 0.6 H10.6 L7.8 9.4 H0.4 Z" fill="#f0e6e4"/><path d="M4.5 2.2 H9 L8.2 4.6 H3.7Z" fill="#c0403a"/><path d="M3 6.2 H5 L4.5 7.8 H2.5Z" fill="#c0403a"/></svg>
<span style="left:73px;top:248.0px;font-size:8.1px;color:#d2d2d2;">ZZ_Grp</span>
<svg style="left:61px;top:259.8px;width:11px;height:10px" viewBox="0 0 11 10"><path d="M3.2 0.6 H10.6 L7.8 9.4 H0.4 Z" fill="#f0e6e4"/><path d="M4.5 2.2 H9 L8.2 4.6 H3.7Z" fill="#c0403a"/><path d="M3 6.2 H5 L4.5 7.8 H2.5Z" fill="#c0403a"/></svg>
<span style="left:73px;top:260.7px;font-size:8.1px;color:#d2d2d2;">PS_Grp</span>
<svg style="left:53.5px;top:272.4px;width:11px;height:10px" viewBox="0 0 11 10"><path d="M3.2 0.6 H10.6 L7.8 9.4 H0.4 Z" fill="#f0e6e4"/><path d="M4.5 2.2 H9 L8.2 4.6 H3.7Z" fill="#c0403a"/><path d="M3 6.2 H5 L4.5 7.8 H2.5Z" fill="#c0403a"/></svg>
<span style="left:65.5px;top:273.3px;font-size:8.1px;color:#ffffff;">DengZi_Grp</span>
<svg style="left:61px;top:286.1px;width:11px;height:8px" viewBox="0 0 11 8"><path d="M5.5 0.3 L10.7 4 L5.5 7.7 L0.3 4Z" fill="#e0e0e0"/><path d="M5.5 2.4 L7.7 4 L5.5 5.6 L3.3 4Z" fill="#3b3b3b"/><path d="M2.9 2.2 L8.1 5.9 M8.1 2.2 L2.9 5.9" stroke="#3b3b3b" stroke-width=".7"/></svg>
<span style="left:72.7px;top:286.0px;font-size:8.1px;color:#d2d2d2;">pCube27</span>
<svg style="left:61px;top:298.8px;width:11px;height:8px" viewBox="0 0 11 8"><path d="M5.5 0.3 L10.7 4 L5.5 7.7 L0.3 4Z" fill="#e0e0e0"/><path d="M5.5 2.4 L7.7 4 L5.5 5.6 L3.3 4Z" fill="#3b3b3b"/><path d="M2.9 2.2 L8.1 5.9 M8.1 2.2 L2.9 5.9" stroke="#3b3b3b" stroke-width=".7"/></svg>
<span style="left:72.7px;top:298.6px;font-size:8.1px;color:#d2d2d2;">pCube28</span>
<svg style="left:61px;top:311.4px;width:11px;height:8px" viewBox="0 0 11 8"><path d="M5.5 0.3 L10.7 4 L5.5 7.7 L0.3 4Z" fill="#e0e0e0"/><path d="M5.5 2.4 L7.7 4 L5.5 5.6 L3.3 4Z" fill="#3b3b3b"/><path d="M2.9 2.2 L8.1 5.9 M8.1 2.2 L2.9 5.9" stroke="#3b3b3b" stroke-width=".7"/></svg>
<span style="left:72.7px;top:311.3px;font-size:8.1px;color:#d2d2d2;">pCube25</span>
<svg style="left:61px;top:324.1px;width:11px;height:8px" viewBox="0 0 11 8"><path d="M5.5 0.3 L10.7 4 L5.5 7.7 L0.3 4Z" fill="#e0e0e0"/><path d="M5.5 2.4 L7.7 4 L5.5 5.6 L3.3 4Z" fill="#3b3b3b"/><path d="M2.9 2.2 L8.1 5.9 M8.1 2.2 L2.9 5.9" stroke="#3b3b3b" stroke-width=".7"/></svg>
<span style="left:72.7px;top:323.9px;font-size:8.1px;color:#d2d2d2;">pCube26</span>
<svg style="left:61px;top:336.7px;width:11px;height:8px" viewBox="0 0 11 8"><path d="M5.5 0.3 L10.7 4 L5.5 7.7 L0.3 4Z" fill="#e0e0e0"/><path d="M5.5 2.4 L7.7 4 L5.5 5.6 L3.3 4Z" fill="#3b3b3b"/><path d="M2.9 2.2 L8.1 5.9 M8.1 2.2 L2.9 5.9" stroke="#3b3b3b" stroke-width=".7"/></svg>
<span style="left:72.7px;top:336.6px;font-size:8.1px;color:#d2d2d2;">pCube30</span>
<svg style="left:61px;top:349.4px;width:11px;height:8px" viewBox="0 0 11 8"><path d="M5.5 0.3 L10.7 4 L5.5 7.7 L0.3 4Z" fill="#e0e0e0"/><path d="M5.5 2.4 L7.7 4 L5.5 5.6 L3.3 4Z" fill="#3b3b3b"/><path d="M2.9 2.2 L8.1 5.9 M8.1 2.2 L2.9 5.9" stroke="#3b3b3b" stroke-width=".7"/></svg>
<span style="left:72.7px;top:349.2px;font-size:8.1px;color:#d2d2d2;">pCube29</span>
<svg style="left:61px;top:362.0px;width:11px;height:8px" viewBox="0 0 11 8"><path d="M5.5 0.3 L10.7 4 L5.5 7.7 L0.3 4Z" fill="#e0e0e0"/><path d="M5.5 2.4 L7.7 4 L5.5 5.6 L3.3 4Z" fill="#3b3b3b"/><path d="M2.9 2.2 L8.1 5.9 M8.1 2.2 L2.9 5.9" stroke="#3b3b3b" stroke-width=".7"/></svg>
<span style="left:72.7px;top:361.9px;font-size:8.1px;color:#d2d2d2;">pCube31</span>
<svg style="left:61px;top:374.7px;width:11px;height:8px" viewBox="0 0 11 8"><path d="M5.5 0.3 L10.7 4 L5.5 7.7 L0.3 4Z" fill="#e0e0e0"/><path d="M5.5 2.4 L7.7 4 L5.5 5.6 L3.3 4Z" fill="#3b3b3b"/><path d="M2.9 2.2 L8.1 5.9 M8.1 2.2 L2.9 5.9" stroke="#3b3b3b" stroke-width=".7"/></svg>
<span style="left:72.7px;top:374.6px;font-size:8.1px;color:#d2d2d2;">pCube32</span>
<svg style="left:53px;top:385.8px;width:11px;height:11px" viewBox="0 0 11 11"><circle cx="5.5" cy="5.5" r="4.8" fill="#3f8f9a" stroke="#cfe3e6" stroke-width=".9"/><rect x="2.6" y="5" width="3.2" height="3.4" fill="#e8e8e8"/><rect x="5" y="2.6" width="3.4" height="5.8" fill="#f4f4f4"/></svg>
<span style="left:64.5px;top:387.2px;font-size:8.1px;color:#d2d2d2;">defaultLightSet</span>
<svg style="left:53px;top:398.4px;width:11px;height:11px" viewBox="0 0 11 11"><circle cx="5.5" cy="5.5" r="4.8" fill="#3f8f9a" stroke="#cfe3e6" stroke-width=".9"/><rect x="2.6" y="5" width="3.2" height="3.4" fill="#e8e8e8"/><rect x="5" y="2.6" width="3.4" height="5.8" fill="#f4f4f4"/></svg>
<span style="left:64.5px;top:399.8px;font-size:8.1px;color:#d2d2d2;">defaultObjectSet</span>
<svg style="left:40px;top:230px;width:30px;height:160px" viewBox="40 230 30 160"><path d="M47.5 244 V264.5 H51 M47.5 252 H51 M47.5 283.5 V378.5 H51.5 M47.5 290 H51.5 M47.5 302.6 H51.5 M47.5 315.3 H51.5 M47.5 328 H51.5 M47.5 340.6 H51.5 M47.5 353.3 H51.5 M47.5 366 H51.5" stroke="#9a9a9a" stroke-width=".8" fill="none"/><rect x="44.8" y="236.6" width="5.4" height="5.4" fill="#3b3b3b" stroke="#999" stroke-width=".8"/><path d="M46 239.3 h3" stroke="#bbb" stroke-width=".8"/><rect x="52" y="249.3" width="5.4" height="5.4" fill="#3b3b3b" stroke="#999" stroke-width=".8"/><path d="M53.2 252 h3 M54.7 250.5 v3" stroke="#bbb" stroke-width=".8"/><rect x="52" y="261.9" width="5.4" height="5.4" fill="#3b3b3b" stroke="#999" stroke-width=".8"/><path d="M53.2 264.6 h3 M54.7 263.1 v3" stroke="#bbb" stroke-width=".8"/><circle cx="53.5" cy="290.0" r="1" fill="#ccc"/><circle cx="53.5" cy="302.6" r="1" fill="#ccc"/><circle cx="53.5" cy="315.3" r="1" fill="#ccc"/><circle cx="53.5" cy="327.9" r="1" fill="#ccc"/><circle cx="53.5" cy="340.6" r="1" fill="#ccc"/><circle cx="53.5" cy="353.2" r="1" fill="#ccc"/><circle cx="53.5" cy="365.9" r="1" fill="#ccc"/><circle cx="53.5" cy="378.6" r="1" fill="#ccc"/></svg>
<div style="left:31px;top:580px;width:108px;height:1px;background:#333;"></div>
<div style="left:38px;top:583.5px;width:86px;height:6px;background:#5a5a5a;border-radius:2px;"></div>
<svg style="left:32px;top:583.5px;width:5px;height:6px" viewBox="0 0 5 6"><path d="M4.4 .5 V5.5 L.6 3Z" fill="#d0d0d0"/></svg>
<svg style="left:125px;top:583.5px;width:5px;height:6px" viewBox="0 0 5 6"><path d="M.6 .5 V5.5 L4.4 3Z" fill="#d0d0d0"/></svg>
<div style="left:29.9px;top:547.2px;width:66.9px;height:22.4px;background:rgba(74,80,110,0.92);border:1px solid #6f7ba2;border-radius:4px;box-sizing:border-box;"></div>
<span style="left:34.5px;top:551.4px;font-size:13.1px;color:#a4aece;font-family:'DejaVu Sans','Liberation Sans',sans-serif;letter-spacing:.2px;">&lt;Enter&gt;</span>
<span style="left:151px;top:142.8px;font-size:7.8px;color:#d6d6d6;">视图</span>
<span style="left:176px;top:142.8px;font-size:7.8px;color:#d6d6d6;">着色</span>
<span style="left:201.5px;top:142.8px;font-size:7.8px;color:#d6d6d6;">照明</span>
<span style="left:227.5px;top:142.8px;font-size:7.8px;color:#d6d6d6;">显示</span>
<span style="left:252.5px;top:142.8px;font-size:7.8px;color:#d6d6d6;">渲染器</span>
<span style="left:286.5px;top:142.8px;font-size:7.8px;color:#d6d6d6;">面板</span>
<svg style="left:144px;top:152px;width:600px;height:15px" viewBox="144 152 600 15"><rect x="146.4" y="155.5" width="1.2" height="8.5" rx=".6" fill="#7a7a7a"/><rect x="238.4" y="155.5" width="1.2" height="8.5" rx=".6" fill="#7a7a7a"/><rect x="329.4" y="155.5" width="1.2" height="8.5" rx=".6" fill="#7a7a7a"/><rect x="421.9" y="155.5" width="1.2" height="8.5" rx=".6" fill="#7a7a7a"/><rect x="477.4" y="155.5" width="1.2" height="8.5" rx=".6" fill="#7a7a7a"/><rect x="496.4" y="155.5" width="1.2" height="8.5" rx=".6" fill="#7a7a7a"/><rect x="539.4" y="155.5" width="1.2" height="8.5" rx=".6" fill="#7a7a7a"/><rect x="152" y="157.3" width="6.4" height="5" fill="#d8d8d8"/><path d="M158.6 159.8 l3.2-2.4 v4.8z" fill="#d8d8d8"/><rect x="163" y="156.5" width="7" height="6.5" fill="#4f9fa8"/><rect x="166" y="156" width="5" height="3.6" fill="#d8d8d8"/><path d="M171 157.8 l2.2-1.6 v3.2z" fill="#d8d8d8"/><rect x="175" y="156.5" width="7.5" height="6.5" fill="#4f9fa8"/><rect x="176.5" y="156" width="5.5" height="3.4" fill="#d8d8d8"/><path d="M182 157.8 l2.6-1.8 v3.6z" fill="#d8d8d8"/><rect x="177" y="160.5" width="3" height="2" fill="#cfe"/><path d="M190.5 156 h4.4 v7.6 l-2.2-1.8 l-2.2 1.8z" fill="#d8d8d8"/><path d="M203 163.5 l3.5-8 l1 5.5 l3 2.5z" fill="#4f9fa8"/><path d="M200.5 163.6 h9.5" stroke="#7fb7c4" stroke-width="1"/><path d="M217.7 155.5 v8 M214 161.5 l3.7 2 l3.7-2" stroke="#4f9fa8" stroke-width=".9" fill="none"/><path d="M214 158.5 l7 3" stroke="#999" stroke-width=".7"/><path d="M226 163.6 l1.2-2.8 l6-5.6 l1.4 1.4 l-5.8 5.8z" fill="#d8d8d8"/><rect x="241.5" y="153.5" width="11.0" height="12" fill="#5285a6"/><path d="M244.5 155.5 v8 M247 155.5 v8 M249.5 155.5 v8" stroke="#dfe8ef" stroke-width="1"/><rect x="255.5" y="156.5" width="9.5" height="6.5" fill="none" stroke="#d8d8d8" stroke-width="1.1"/><rect x="267" y="153.5" width="11.5" height="12" fill="#5285a6"/><rect x="268.8" y="156" width="8" height="7" fill="none" stroke="#e6eef4" stroke-width="1"/><rect x="271" y="158" width="3.6" height="2.6" fill="#24465e"/><rect x="279.3" y="153.5" width="11.699999999999989" height="12" fill="#5285a6"/><rect x="281" y="156" width="8.4" height="7" rx="1" fill="#e6eef4"/><rect x="283" y="157.8" width="4.4" height="3.4" rx="1" fill="#3a6a8c"/><rect x="293" y="156.3" width="8.4" height="7" fill="none" stroke="#9fb4c0" stroke-width=".9"/><path d="M295 161.5 l2-3 l1.4 1.6 l1.6-2" stroke="#9fb4c0" stroke-width=".8" fill="none"/><rect x="305" y="156.3" width="8.4" height="7" fill="none" stroke="#9fb4c0" stroke-width=".9"/><path d="M306.5 162 l2.6-3.6 l2.8 3.6z" fill="#9fb4c0"/><rect x="317.3" y="156.3" width="8.4" height="7" fill="none" stroke="#9fb4c0" stroke-width=".9"/><path d="M319 161 h5 M321.5 158 v3" stroke="#9fb4c0" stroke-width=".8"/><path d="M340 155.3 l4 2 v4.8 l-4 2.2 l-4-2.2 v-4.8z" fill="none" stroke="#aaa" stroke-width=".9"/><path d="M336 157.3 l4 2 l4-2 M340 159.3 v5" stroke="#aaa" stroke-width=".7" fill="none"/><rect x="345.5" y="153.5" width="12.0" height="12" fill="#5285a6"/><path d="M351.5 155.2 l4.2 2.1 v4.9 l-4.2 2.3 l-4.2-2.3 v-4.9z" fill="#7cc6d6"/><path d="M347.3 157.3 l4.2 2.1 l4.2-2.1 M351.5 159.4 v5" stroke="#d9f0f5" stroke-width=".7" fill="none"/><path d="M364 155.2 l4.2 2.1 v4.9 l-4.2 2.3 l-4.2-2.3 v-4.9z" fill="#d8d8d8"/><path d="M364 159.4 l4.2-2.1 v4.9 l-4.2 2.3z" fill="#444"/><path d="M377 155.2 l4.2 2.1 v4.9 l-4.2 2.3 l-4.2-2.3 v-4.9z" fill="#5fa8b4"/><circle cx="377" cy="159.8" r="2" fill="#bfe0e6"/><rect x="382.5" y="153.5" width="11.5" height="12" fill="#5285a6"/><rect x="384.3" y="155.5" width="8" height="8" fill="none" stroke="#dfe8ef" stroke-width=".6"/><path d="M384.3 155.5 l8 8 M388.3 155.5 l4 4 M384.3 159.5 l4 4 M392.3 155.5 l-8 8 M388.3 155.5 l-4 4 M392.3 159.5 l-4 4" stroke="#dfe8ef" stroke-width=".6"/><circle cx="401.7" cy="158.8" r="2.6" fill="#d8d8d8"/><path d="M401.7 153.6 v1.4 M397.2 158.8 h1.2 M405 158.8 h1.2 M398.5 155.4 l1 1 M404.9 155.4 l-1 1 M400.7 161.5 h2 v2.4 h-2z" stroke="#d8d8d8" stroke-width=".8" fill="#d8d8d8"/><rect x="409" y="156.5" width="8" height="6.5" fill="#555"/><circle cx="432" cy="158.8" r="3" fill="#cfcfcf"/><ellipse cx="432" cy="163" rx="4" ry="1" fill="#777"/><circle cx="446" cy="158.3" r="3" fill="#cfcfcf"/><ellipse cx="443.5" cy="162.8" rx="3.6" ry="1.1" fill="#888"/><circle cx="457.3" cy="159.7" r="3.5" fill="none" stroke="#4f9fa8" stroke-width="1.4"/><rect x="465" y="156.5" width="8" height="6.5" fill="#525252"/><path d="M487 155.5 l5.5 5.2 l-2.5.2 l1.2 2.7 l-1 .4 l-1.2-2.6 l-2 1.6z" fill="#d8d8d8"/><path d="M485 157 v5" stroke="#999" stroke-width=".7" stroke-dasharray="1 1"/><rect x="504.5" y="155.8" width="6" height="5.4" fill="#d8d8d8"/><rect x="502" y="158.4" width="6" height="5.4" fill="#444" stroke="#d8d8d8" stroke-width=".9"/><rect x="516.5" y="155.8" width="6" height="5.4" fill="none" stroke="#d8d8d8" stroke-width=".9"/><rect x="514" y="158.4" width="6" height="5.4" fill="#d8d8d8"/><rect x="526" y="155.8" width="8.4" height="8" fill="none" stroke="#d8d8d8" stroke-width=".9"/><path d="M528 157.8 l4 4 M528 157.8 h2.4 M528 157.8 v2.4" stroke="#d8d8d8" stroke-width=".9" fill="none"/><circle cx="550" cy="159.7" r="3" fill="none" stroke="#d8d8d8" stroke-width="1.7"/><circle cx="550" cy="159.7" r="4.3" fill="none" stroke="#d8d8d8" stroke-width="1.2" stroke-dasharray="1.3 1.4"/><rect x="556.7" y="153.8" width="24.5" height="11.4" fill="#2b2b2b"/><path d="M590 155.5 a4.2 4.2 0 0 0 0 8.4z" fill="#d8d8d8"/><path d="M590 155.5 a4.2 4.2 0 0 1 0 8.4" fill="none" stroke="#d8d8d8" stroke-width=".9"/><rect x="596.7" y="153.8" width="23.5" height="11.4" fill="#2b2b2b"/><rect x="620.7" y="153.3" width="11.5" height="12.2" fill="#3d8ecb"/><rect x="623.3" y="156" width="6.4" height="6.4" rx="1.4" fill="none" stroke="#a9d4f2" stroke-width="1"/><path d="M625 160.7 h3" stroke="#a9d4f2" stroke-width=".9"/><rect x="632.2" y="153.3" width="107" height="12.2" fill="#5d5d5d"/><path d="M730.5 158 h6 l-3 3.6z" fill="#d8d8d8"/></svg>
<span style="left:561.5px;top:155.8px;font-size:7.6px;color:#d4d4d4;">0.00</span>
<span style="left:601.5px;top:155.8px;font-size:7.6px;color:#d4d4d4;">1.00</span>
<span style="left:636px;top:155.6px;font-size:7.7px;color:#dedede;">sRGB gamma</span>
<div style="left:144px;top:166.3px;width:767px;height:427.9px;background:#a8a8a8;"></div>
<svg style="left:233px;top:214px;width:590px;height:332px;overflow:hidden" viewBox="233 214 590 332">
<rect x="233" y="214" width="590" height="332" fill="#5e5e5e"/>
<path d="M1032.4 403.5L475.5 338.0M-229.4 427.9L475.5 338.0M1032.5 409.9L462.2 339.7M-234.2 435.6L487.8 339.4M1032.5 416.9L448.3 341.5M-239.5 444.0L500.7 341.0M1032.5 424.7L433.7 343.3M-245.4 453.3L514.0 342.5M1032.5 433.3L418.4 345.3M-251.8 463.6L528.0 344.2M1032.6 442.9L402.2 347.4M-259.1 475.1L542.6 345.9M1032.6 453.7L385.1 349.5M-267.3 488.1L557.8 347.7M1032.6 465.8L367.1 351.8M-276.5 502.7L573.7 349.6M1032.7 479.7L348.1 354.3M-287.1 519.5L590.4 351.5M1032.7 495.7L328.0 356.8M-299.3 538.8L608.0 353.6M1032.8 514.2L306.6 359.6M-313.5 561.4L626.4 355.7M1032.8 536.0L283.9 362.4M-330.2 588.0L645.7 358.0M1033.0 593.6L233.9 368.8M-374.9 658.8L687.5 362.9M1033.2 632.8L206.4 372.3M-405.5 707.4L710.2 365.6M1033.3 682.7L176.8 376.1M-444.8 769.8L734.1 368.4M1033.5 748.3L145.1 380.2M-497.0 852.7L759.5 371.4M1033.8 838.5L110.9 384.5M-569.9 968.4L786.3 374.6M1034.2 970.3L74.0 389.2M-678.7 1141.1L814.9 377.9M1034.9 1181.1L34.0 394.3M-858.6 1426.6L845.3 381.5M1036.1 1572.5L-9.5 399.9M-1212.9 1989.0L877.7 385.3M830.1 2141.0L-57.0 405.9M-798.8 2141.0L912.4 389.4M117.2 2141.0L-109.0 412.6M-186.6 2141.0L949.6 393.8M-595.7 2141.0L-166.2 419.9M425.7 2141.0L989.5 398.5M-1308.7 2141.0L-229.4 427.9M1037.9 2141.0L1032.4 403.5" stroke="#4c4c4c" stroke-width="1.3" fill="none" opacity="0.62"/>
<path d="M1032.9 562.0L259.7 365.5M-350.3 619.9L666.1 360.4" stroke="#404040" stroke-width="1.2" fill="none" opacity="0.85"/>
<g style="filter:brightness(0.97)">
<polygon points="459.5,288 475,287 475,391 460.5,392" fill="#a6a6a6" />
<polygon points="459.5,288 463,288 463.5,392 460.5,392" fill="#b0b0b0" />
<polygon points="572,283 590.5,283 589.5,413 573,415" fill="#b3b3b3" />
<polygon points="583,283 590.5,283 589.5,413 584,414" fill="#a9a9a9" />
<polygon points="322.5,283 342,284 349,416 331,418" fill="#b3b3b3" />
<polygon points="322.5,283 328,283 337,418 331,418" fill="#a9a9a9" />
<polygon points="335.5,314 436,308 436,320 415,322.3 335.5,315.6" fill="#b5b5b5" />
<polygon points="459.5,306.5 576.6,314.6 576,315.2 476.5,325.2 459.5,319" fill="#b5b5b5" />
<polygon points="415,322.3 436,320 436,324.2" fill="#565656" />
<polygon points="459.5,319 476.5,325.2 459.5,327" fill="#565656" />
<polygon points="335.5,315.6 436,324.2 436,341.3 343.3,330.2 336.5,329" fill="#a6a6a6" />
<polygon points="459.5,327 576,315 575,328.4 459.5,341.3" fill="#acacac" />
<polygon points="434,288 460,288 460.5,453 448.6,455 436.7,453" fill="#b0b0b0" />
<polygon points="434,288 447,289 448.6,455 436.7,453" fill="#b7b7b7" />
<polygon points="301,272 442,274.5 442,289.6 303,284.6" fill="#adadad" />
<polygon points="442,274.5 611.5,272 611.5,284 442,289.6" fill="#b0b0b0" />
<polygon points="301,272 442,274.5 611.5,272 470,271" fill="#b3b3b3" />
<path d="M441.6 274.6 V288.8" stroke="#9a9a9a" stroke-width=".7"/>
</g>
<defs><radialGradient id="pl" cx="0.45" cy="0.5" r="0.52"><stop offset="0" stop-color="#080808"/><stop offset="0.6" stop-color="#1a1a1a"/><stop offset="0.85" stop-color="#4a4a4a"/><stop offset="1" stop-color="#8a8a8a"/></radialGradient><linearGradient id="vs" x1="0" x2="1"><stop offset="0" stop-color="#a9a9a9"/><stop offset="0.35" stop-color="#c9c9c9"/><stop offset="0.8" stop-color="#c0c0c0"/><stop offset="1" stop-color="#8f8f8f"/></linearGradient></defs>
<ellipse cx="447.5" cy="263.6" rx="28.3" ry="1.5" fill="#9c9c9c"/>
<path d="M421.5 263.6 Q427 271.2 447.5 271.4 Q468 271.2 473.5 263.6 Z" fill="url(#pl)"/>
<path d="M494.2 261.5 L502.5 261.5 L501.5 272 L495.5 272 Z" fill="#c4c4c4"/>
<path d="M508 229 L518 229 C519 233 526.7 238 526.7 248 C526.7 258 524 266 523.6 272 L503.5 272 C502 266 498.9 258 498.9 248 C498.9 238 507 233 508 229 Z" fill="url(#vs)"/>
<rect x="508" y="227.3" width="10" height="2" fill="#4a4a4a"/>
<polygon points="530,408 640,380 640,384 532,412" fill="#86a198" stroke="#67d6b2" stroke-width="1.2" stroke-linejoin="round"/>
<polygon points="616.6,351 628,349 615.5,425 604.7,424" fill="#8ca39c" stroke="#67d6b2" stroke-width="1.2" stroke-linejoin="round"/>
<polygon points="637,348 649.3,347 656.8,433 645,434" fill="#8ca39c" stroke="#67d6b2" stroke-width="1.2" stroke-linejoin="round"/>
<polygon points="506,404.5 531,410.5 531,417.5 505.5,411.5" fill="#86a198" stroke="#67d6b2" stroke-width="1.2" stroke-linejoin="round"/>
<polygon points="503.8,373 517.4,374 508.3,462 493.7,463.2" fill="#8ca39c" stroke="#67d6b2" stroke-width="1.2" stroke-linejoin="round"/>
<polygon points="525.3,374 538.8,372 551.7,476 541,478 536.5,476" fill="#8ca39c" stroke="#67d6b2" stroke-width="1.2" stroke-linejoin="round"/>
<polygon points="491.4,361.7 522.3,367 657.2,341.4 637,338.7" fill="#808c88" stroke="#67d6b2" stroke-width="1.2" stroke-linejoin="round"/>
<polygon points="491.4,361.7 522.3,367 522.3,374.4 491.4,369.5" fill="#92aba3" stroke="#67d6b2" stroke-width="1.2" stroke-linejoin="round"/>
<polygon points="522.3,367 657.2,341.4 657.2,349 522.3,374.4" fill="#92aba3" stroke="#67d6b2" stroke-width="1.2" stroke-linejoin="round"/>
<path d="M510.6 373.5 L501 462.6 M532 373 L544 477 M622.3 350 L610 424.5 M643 347.5 L651 433.5 M506.8 364.3 L647 340" stroke="#7fd9bb" stroke-width="0.6" fill="none" opacity=".8"/>
</svg>
<span style="left:510px;top:167.4px;font-size:6.6px;color:#1d5046;font-weight:700;">1920 x 1080</span>
<span style="left:513.4px;top:580.8px;font-size:6.8px;color:#f4f4f4;font-weight:700;">persp</span>
<svg style="left:148px;top:566px;width:16px;height:22px" viewBox="148 566 16 22"><path d="M158.8 582.5 V571.5" stroke="#3fbf5a" stroke-width="1.2"/><path d="M158.8 582.5 L153.6 584.8" stroke="#d04a5a" stroke-width="1.2"/><path d="M158.8 582.5 L153.2 579" stroke="#4060d0" stroke-width="1.2"/><text x="157.6" y="570.6" font-size="3.4" fill="#3fbf5a" font-family="Liberation Sans,sans-serif">y</text><text x="151" y="586.5" font-size="3.4" fill="#d04a5a" font-family="Liberation Sans,sans-serif">x</text><text x="150.8" y="579" font-size="3.4" fill="#4060d0" font-family="Liberation Sans,sans-serif">z</text></svg>
<div style="left:914px;top:138px;width:1px;height:456px;background:#363636;"></div>
<svg style="left:1020px;top:138px;width:50px;height:16px" viewBox="1020 138 50 16"><path d="M1031.5 146 V141.5 M1031.5 146 L1027.8 149 M1031.5 146 L1035.2 149" stroke="#c0c0c0" stroke-width="1.2" fill="none"/><circle cx="1031.5" cy="141.6" r="1.3" fill="#d05050"/><circle cx="1027.8" cy="149" r="1.3" fill="#5070d0"/><circle cx="1035.2" cy="149" r="1.3" fill="#c06060"/><path d="M1041.3 150 a4.3 4.3 0 1 1 8.6 0" fill="none" stroke="#3d9bd0" stroke-width="2.2"/><rect x="1054.5" y="141.5" width="8" height="8" fill="none" stroke="#5a7f94" stroke-width=".8"/><path d="M1056 148 l5.6-6" stroke="#5fa8c8" stroke-width="1.1"/></svg>
<span style="left:922.5px;top:155px;font-size:8px;color:#cfcfcf;">通道</span>
<span style="left:947px;top:155px;font-size:8px;color:#cfcfcf;">编辑</span>
<span style="left:973px;top:155px;font-size:8px;color:#cfcfcf;">对象</span>
<span style="left:999px;top:155px;font-size:8px;color:#cfcfcf;">显示</span>
<span style="left:917.5px;top:170.6px;font-size:6.3px;color:#d8d8d8;font-family:'Liberation Mono','DejaVu Sans Mono',monospace;font-weight:700;">DengZi_Grp</span>
<div style="left:1018.5px;top:177px;width:47px;height:92px;background:#2b2b2b;"></div>
<span style="left:960px;width:55px;text-align:right;top:177.9px;font-size:7px;color:#a8a8a8;">平移 X</span>
<span style="left:1023.5px;top:177.3px;font-size:8.2px;color:#e4e4e4;">0</span>
<div style="left:1018.5px;top:186.5px;width:47px;height:0.8px;background:#3a3a3a;"></div>
<span style="left:960px;width:55px;text-align:right;top:188.1px;font-size:7px;color:#a8a8a8;">平移 Y</span>
<span style="left:1023.5px;top:187.5px;font-size:8.2px;color:#e4e4e4;">0</span>
<div style="left:1018.5px;top:196.7px;width:47px;height:0.8px;background:#3a3a3a;"></div>
<span style="left:960px;width:55px;text-align:right;top:198.3px;font-size:7px;color:#a8a8a8;">平移 Z</span>
<span style="left:1023.5px;top:197.7px;font-size:8.2px;color:#e4e4e4;">0</span>
<div style="left:1018.5px;top:206.9px;width:47px;height:0.8px;background:#3a3a3a;"></div>
<span style="left:960px;width:55px;text-align:right;top:208.5px;font-size:7px;color:#a8a8a8;">旋转 X</span>
<span style="left:1023.5px;top:207.9px;font-size:8.2px;color:#e4e4e4;">0</span>
<div style="left:1018.5px;top:217.1px;width:47px;height:0.8px;background:#3a3a3a;"></div>
<span style="left:960px;width:55px;text-align:right;top:218.7px;font-size:7px;color:#a8a8a8;">旋转 Y</span>
<span style="left:1023.5px;top:218.1px;font-size:8.2px;color:#e4e4e4;">0</span>
<div style="left:1018.5px;top:227.3px;width:47px;height:0.8px;background:#3a3a3a;"></div>
<span style="left:960px;width:55px;text-align:right;top:228.9px;font-size:7px;color:#a8a8a8;">旋转 Z</span>
<span style="left:1023.5px;top:228.3px;font-size:8.2px;color:#e4e4e4;">0</span>
<div style="left:1018.5px;top:237.5px;width:47px;height:0.8px;background:#3a3a3a;"></div>
<span style="left:960px;width:55px;text-align:right;top:239.1px;font-size:7px;color:#a8a8a8;">缩放 X</span>
<span style="left:1023.5px;top:238.5px;font-size:8.2px;color:#e4e4e4;">1</span>
<div style="left:1018.5px;top:247.7px;width:47px;height:0.8px;background:#3a3a3a;"></div>
<span style="left:960px;width:55px;text-align:right;top:249.3px;font-size:7px;color:#a8a8a8;">缩放 Y</span>
<span style="left:1023.5px;top:248.7px;font-size:8.2px;color:#e4e4e4;">1</span>
<div style="left:1018.5px;top:257.9px;width:47px;height:0.8px;background:#3a3a3a;"></div>
<span style="left:960px;width:55px;text-align:right;top:259.5px;font-size:7px;color:#a8a8a8;">缩放 Z</span>
<span style="left:1023.5px;top:258.9px;font-size:8.2px;color:#e4e4e4;">1</span>
<span style="left:960px;width:55px;text-align:right;top:269.7px;font-size:7px;color:#a8a8a8;">可见性</span>
<span style="left:1023.5px;top:269.1px;font-size:8.2px;color:#e4e4e4;">启用</span>
<div style="left:917px;top:288px;width:149px;height:151px;background:#2b2b2b;"></div>
<div style="left:1066px;top:138px;width:14px;height:456px;background:#3c3c3c;"></div>
<div style="left:1066.5px;top:139px;width:13.5px;height:69px;background:#474747;"></div>
<span style="left:1077.2px;top:144px;font-size:8px;color:#f4f4f4;transform-origin:0 0;transform:rotate(90deg);font-weight:700;">通道盒/层编辑器</span>
<span style="left:1077.2px;top:217px;font-size:7.4px;color:#8e8e8e;transform-origin:0 0;transform:rotate(90deg);font-weight:700;">建模工具包</span>
<span style="left:1077.2px;top:270px;font-size:7.4px;color:#8e8e8e;transform-origin:0 0;transform:rotate(90deg);font-weight:700;">属性编辑器</span>
<div style="left:1066.5px;top:210px;width:13.5px;height:1px;background:#2e2e2e;"></div>
<div style="left:1066.5px;top:262px;width:13.5px;height:1px;background:#2e2e2e;"></div>
<div style="left:1066.5px;top:312px;width:13.5px;height:1px;background:#2e2e2e;"></div>
<svg style="left:960px;top:440px;width:60px;height:4px" viewBox="0 0 60 4"><path d="M5 2 h50" stroke="#6a6a6a" stroke-width="1.2" stroke-dasharray="1.2 1.6"/></svg>
<div style="left:917px;top:446.3px;width:149px;height:11.2px;background:#3a3a3a;"></div>
<div style="left:917px;top:446.3px;width:29px;height:11.2px;background:#444;"></div>
<span style="left:924.5px;top:448.3px;font-size:7.8px;color:#f0f0f0;">显示</span>
<span style="left:955.5px;top:448.3px;font-size:7.8px;color:#808080;">动画</span>
<span style="left:924.5px;top:462.4px;font-size:7.5px;color:#c8c8c8;">层</span>
<span style="left:943px;top:462.4px;font-size:7.5px;color:#c8c8c8;">选项</span>
<span style="left:968.5px;top:462.4px;font-size:7.5px;color:#c8c8c8;">帮助</span>
<svg style="left:1000px;top:473px;width:66px;height:13px" viewBox="1000 473 66 13"><path d="M1003.5 479.5 l4-2.6 l4.5 2.6 l-4.5 2.8z" fill="#d8e4ea"/><path d="M1003.5 479.5 l4 2.8 v1.6 l-4-2.8z" fill="#8fb0c0"/><circle cx="1011.2" cy="481" r="1.5" fill="#4fa8c8"/><path d="M1019.5 479.5 l4-2.6 l4.5 2.6 l-4.5 2.8z" fill="#d8e4ea"/><path d="M1019.5 479.5 l4 2.8 v1.6 l-4-2.8z" fill="#8fb0c0"/><circle cx="1027.2" cy="481" r="1.5" fill="#4fa8c8"/><path d="M1035.5 479.5 l4-2.6 l4.5 2.6 l-4.5 2.8z" fill="#d8e4ea"/><path d="M1035.5 479.5 l4 2.8 v1.6 l-4-2.8z" fill="#8fb0c0"/><circle cx="1043.2" cy="477.5" r="1.5" fill="#4fa8c8"/><path d="M1051.5 479.5 l4-2.6 l4.5 2.6 l-4.5 2.8z" fill="#d8e4ea"/><path d="M1051.5 479.5 l4 2.8 v1.6 l-4-2.8z" fill="#8fb0c0"/><circle cx="1059.2" cy="477.5" r="1.5" fill="#4fa8c8"/></svg>
<div style="left:917px;top:488.5px;width:149px;height:95px;background:#2b2b2b;"></div>
<span style="left:923px;top:492.4px;font-size:8px;color:#e0e0e0;">V</span>
<span style="left:937px;top:492.4px;font-size:8px;color:#e0e0e0;">P</span>
<div style="left:947px;top:490px;width:13px;height:11px;background:#333;"></div>
<svg style="left:961px;top:490px;width:11px;height:11px" viewBox="0 0 11 11"><path d="M1 10 L10 1 V10Z" fill="none" stroke="#d0d0d0" stroke-width=".9"/></svg>
<span style="left:972px;top:492.2px;font-size:7.8px;color:#e6e6e6;">layer1</span>
<div style="left:925px;top:586.5px;width:86px;height:5.5px;background:#5a5a5a;border-radius:2px;"></div>
<svg style="left:919px;top:586px;width:5px;height:6px" viewBox="0 0 5 6"><path d="M4.4 .5 V5.5 L.6 3Z" fill="#d0d0d0"/></svg>
<svg style="left:1058px;top:586px;width:5px;height:6px" viewBox="0 0 5 6"><path d="M.6 .5 V5.5 L4.4 3Z" fill="#d0d0d0"/></svg>
<div style="left:0px;top:594px;width:1080px;height:29px;background:#444;"></div>
<div style="left:0px;top:620.5px;width:1080px;height:1.5px;background:#383838;"></div>
<div style="left:8px;top:601px;width:57px;height:14.5px;background:#2b2b2b;"></div>
<span style="left:14px;top:604.6px;font-size:7.6px;color:#cfcfcf;">1</span>
<div style="left:70px;top:601px;width:57px;height:14.5px;background:#2b2b2b;"></div>
<span style="left:76px;top:604.6px;font-size:7.6px;color:#cfcfcf;">1</span>
<div style="left:133px;top:601px;width:504px;height:14.5px;background:#373737;"></div>
<div style="left:134px;top:602px;width:307px;height:12.5px;background:#5e5e5e;"></div>
<div style="left:136.5px;top:604px;width:8px;height:8px;background:#b8b8b8;border-radius:1px;"></div>
<span style="left:148px;top:604.6px;font-size:7.6px;color:#e0e0e0;">1</span>
<div style="left:430px;top:604px;width:8px;height:8px;background:#b8b8b8;border-radius:1px;"></div>
<span style="left:414px;top:604.6px;font-size:7.6px;color:#e0e0e0;">120</span>
<div style="left:641px;top:601px;width:56.5px;height:14.5px;background:#2b2b2b;"></div>
<span style="left:646.5px;top:604.6px;font-size:7.6px;color:#cfcfcf;">120</span>
<div style="left:703px;top:601px;width:56px;height:14.5px;background:#2b2b2b;"></div>
<span style="left:708.5px;top:604.6px;font-size:7.6px;color:#cfcfcf;">200</span>
<div style="left:762.5px;top:602px;width:1.3px;height:12px;background:#8a8a8a;"></div>
<div style="left:937.5px;top:602px;width:1.3px;height:12px;background:#8a8a8a;"></div>
<div style="left:1033px;top:602px;width:1.3px;height:12px;background:#8a8a8a;"></div>
<svg style="left:773px;top:606px;width:7px;height:5px" viewBox="0 0 7 5"><path d="M.6 .6 H6.4 L3.5 4.2Z" fill="#777"/></svg>
<svg style="left:855px;top:606px;width:7px;height:5px" viewBox="0 0 7 5"><path d="M.6 .6 H6.4 L3.5 4.2Z" fill="#777"/></svg>
<div style="left:783px;top:601.5px;width:65px;height:13.5px;background:#494949;"></div>
<span style="left:787.5px;top:604.3px;font-size:7.6px;color:#d0d0d0;">无角色集</span>
<div style="left:868px;top:601.5px;width:64px;height:13.5px;background:#494949;"></div>
<span style="left:871.5px;top:604.3px;font-size:7.6px;color:#d0d0d0;">无动画层</span>
<div style="left:946.5px;top:601.5px;width:59.5px;height:13.5px;background:#5f5f5f;"></div>
<span style="left:949.5px;top:604.2px;font-size:7.9px;color:#dcdcdc;">24 fps</span>
<svg style="left:996px;top:606px;width:8px;height:5px" viewBox="0 0 8 5"><path d="M.6 .6 H7.4 L4 4.6Z" fill="#d8d8d8"/></svg>
<svg style="left:1010px;top:600px;width:70px;height:17px" viewBox="1010 600 70 17"><rect x="1014.5" y="605.5" width="9.5" height="5.6" rx="2.8" fill="none" stroke="#e0e0e0" stroke-width="1.4"/><path d="M1020 603.6 l2.6 2 l-2.6 2z M1018.4 613 l-2.6-2 l2.6-2z" fill="#e0e0e0"/><circle cx="1048" cy="608.3" r="4.3" fill="none" stroke="#d88a4a" stroke-width="1.1"/><path d="M1048 605.8 v2.8 h2" stroke="#e0e0e0" stroke-width=".9" fill="none"/><path d="M1044 611.5 h8" stroke="#e0e0e0" stroke-width="1"/><circle cx="1066" cy="603.8" r="1.5" fill="#e8e8e8"/><path d="M1064.5 606 l3 2.4 l-2 2.6 l1.5 3 M1067.5 608.4 l3.2 .6 M1065.5 611 l-3 2.6" stroke="#e08a3a" stroke-width="1.4" fill="none"/><circle cx="1062.5" cy="605" r="1.6" fill="none" stroke="#d8d8d8" stroke-width=".8"/></svg>
<div style="left:0px;top:622px;width:1080px;height:10px;background:#444;"></div>
<div style="left:38px;top:624.2px;width:225px;height:8px;background:#2b2b2b;"></div>
<div style="left:268px;top:624.2px;width:788px;height:8px;background:#2b2b2b;"></div>
<span style="left:14px;top:626.6px;font-size:7.4px;color:#dcdcdc;">MEL</span>
<span style="left:274.5px;top:626.6px;font-size:7.2px;color:#c8c8c8;">// 结果: DengZi_Grp</span>
<svg style="left:1062px;top:623.5px;width:13px;height:9px" viewBox="0 0 13 9"><rect x="1" y="1.5" width="11" height="7.5" fill="#d0d0d0"/><path d="M2.5 4 h8 M2.5 6.5 h8" stroke="#555" stroke-width="1"/></svg>
<div style="left:0px;top:632.4px;width:1035px;height:25.1px;background:#864cb0;"></div>
<div style="left:0px;top:657px;width:1080px;height:52px;background:#000;"></div>
<div style="left:1035px;top:632px;width:45px;height:25px;background:#000;"></div>
<div style="left:483px;top:633px;width:2.4px;height:8.5px;background:#fff;"></div>
<div style="left:483px;top:647px;width:2.4px;height:9px;background:#fff;"></div>
<span style="left:180.6px;top:636.6px;font-size:17.3px;color:#fdf4ff;font-family:'Noto Serif CJK SC',serif;font-weight:900;-webkit-text-stroke:.55px #fdf4ff;">模型調整</span>
<span style="left:757.4px;top:636.6px;font-size:17.3px;color:#fdf4ff;font-family:'Noto Serif CJK SC',serif;font-weight:900;-webkit-text-stroke:.55px #fdf4ff;">板凳制作</span></div></div></body></html>
